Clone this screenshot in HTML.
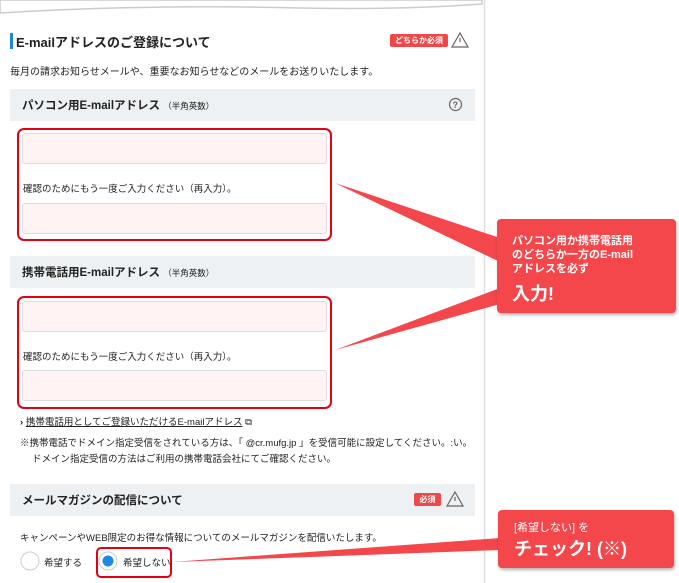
<!DOCTYPE html>
<html><head><meta charset="utf-8"><style>
*{margin:0;padding:0;box-sizing:border-box}
body{width:679px;height:583px;background:#fff;position:relative;overflow:hidden;font-family:"Liberation Sans","Noto Sans CJK JP",sans-serif;color:#222}
.a{position:absolute;white-space:nowrap}
.gh{position:absolute;left:10px;width:465px;height:32px;background:#edf1f3}
.rb{position:absolute;left:17px;width:315px;height:113px;border:2.5px solid #e60012;border-radius:7px}
.in{position:absolute;left:22px;width:305px;height:31px;background:#fff3f3;border:1px solid #ddd;border-radius:3px}
.s11{font-size:10px}
.badge{position:absolute;background:#f04848;color:#fff;font-size:8px;font-weight:bold;text-align:center;line-height:13px;border-radius:2px;overflow:hidden;white-space:nowrap}
.call{position:absolute;background:#f4474b;color:#fff;border-radius:4px;box-shadow:1px 2px 3px rgba(0,0,0,.3)}
</style></head><body>
<svg class="a" style="left:0;top:0" width="679" height="583">
<path d="M0 0 H482 V4 Q400 10 300 8 Q150 4 0 13 Z" fill="#fff" stroke="#ccc" stroke-width="1.5"/>
<line x1="484.5" y1="0" x2="484.5" y2="583" stroke="#ddd" stroke-width="1.5"/>
</svg>
<div class="a" style="left:10px;top:33px;width:3px;height:16px;background:#1a8ad4"></div>
<div class="a" style="left:16px;top:32px;font-size:13px;font-weight:bold">E-mailアドレスのご登録について</div>
<div class="badge" style="left:390px;top:34px;width:58px">どちらか必須</div>
<div class="a s11" style="left:10px;top:63px">毎月の請求お知らせメールや、重要なお知らせなどのメールをお送りいたします。</div>
<div class="gh" style="top:89px"></div>
<div class="a" style="left:22px;top:97px;font-size:11.5px;font-weight:bold">パソコン用E-mailアドレス <span style="font-size:8.5px;font-weight:normal">（半角英数）</span></div>
<div class="rb" style="top:128px"></div>
<div class="in" style="top:133px"></div>
<div class="a" style="left:23px;top:181px;font-size:9.5px">確認のためにもう一度ご入力ください（再入力）。</div>
<div class="in" style="top:203px"></div>
<div class="gh" style="top:256px"></div>
<div class="a" style="left:22px;top:264px;font-size:11.5px;font-weight:bold">携帯電話用E-mailアドレス <span style="font-size:8.5px;font-weight:normal">（半角英数）</span></div>
<div class="rb" style="top:296px"></div>
<div class="in" style="top:301px"></div>
<div class="a" style="left:23px;top:349px;font-size:9.5px">確認のためにもう一度ご入力ください（再入力）。</div>
<div class="in" style="top:370px"></div>
<div class="a" style="left:20px;top:414px;font-size:9.5px"><b>›</b> <u>携帯電話用としてご登録いただけるE-mailアドレス</u> ⧉</div>
<div class="a" style="left:20px;top:435px;font-size:9.5px">※携帯電話でドメイン指定受信をされている方は、「 @cr.mufg.jp 」を受信可能に設定してください。:い。</div>
<div class="a" style="left:32px;top:451px;font-size:9.5px">ドメイン指定受信の方法はご利用の携帯電話会社にてご確認ください。</div>
<div class="gh" style="top:484px"></div>
<div class="a" style="left:22px;top:492px;font-size:11.5px;font-weight:bold">メールマガジンの配信について</div>
<div class="badge" style="left:414px;top:493px;width:27px">必須</div>
<div class="a" style="left:20px;top:530px;font-size:9.5px">キャンペーンやWEB限定のお得な情報についてのメールマガジンを配信いたします。</div>
<div class="a" style="left:44px;top:555px;font-size:9.5px">希望する</div>
<div class="a" style="left:96px;top:547px;width:76px;height:31px;border:2.5px solid #e60012;border-radius:5px"></div>
<div class="a" style="left:123px;top:555px;font-size:9.5px">希望しない</div>
<svg class="a" style="left:0;top:0" width="679" height="583">
<polygon points="335,183 500,238 500,262" fill="#f4474b"/>
<polygon points="335,350 500,288 500,304" fill="#f4474b"/>
<polygon points="172,562 500,538 500,550" fill="#f4474b"/>
<g fill="none" stroke="#666" stroke-width="1.2"><path d="M460 33 L468 47 H452 Z"/><path d="M460 38 V42"/><path d="M455 492 L463 506 H447 Z"/><path d="M455 497 V501"/><circle cx="455.5" cy="104.5" r="6"/></g>
<text x="452.5" y="108" font-size="9" fill="#666" font-family="Liberation Sans" font-weight="bold">?</text>
<circle cx="30" cy="561" r="9" fill="#fff" stroke="#ccc"/>
<circle cx="108" cy="561" r="9" fill="#fff" stroke="#ccc"/>
<circle cx="108" cy="561" r="5.5" fill="#1e88e5"/>
</svg>
<div class="call" style="left:497px;top:219px;width:179px;height:94px"></div>
<div class="a" style="left:512px;top:234px;font-size:11px;line-height:14px;color:#fff;font-weight:bold">パソコン用か携帯電話用<br>のどちらか一方のE-mail<br>アドレスを必ず</div>
<div class="a" style="left:512px;top:280px;font-size:18px;color:#fff;font-weight:bold">入力!</div>
<div class="call" style="left:498px;top:510px;width:176px;height:58px"></div>
<div class="a" style="left:514px;top:519px;font-size:11px;color:#fff">[希望しない] を</div>
<div class="a" style="left:514px;top:535px;font-size:18px;color:#fff;font-weight:bold">チェック! (※)</div>
</body></html>
